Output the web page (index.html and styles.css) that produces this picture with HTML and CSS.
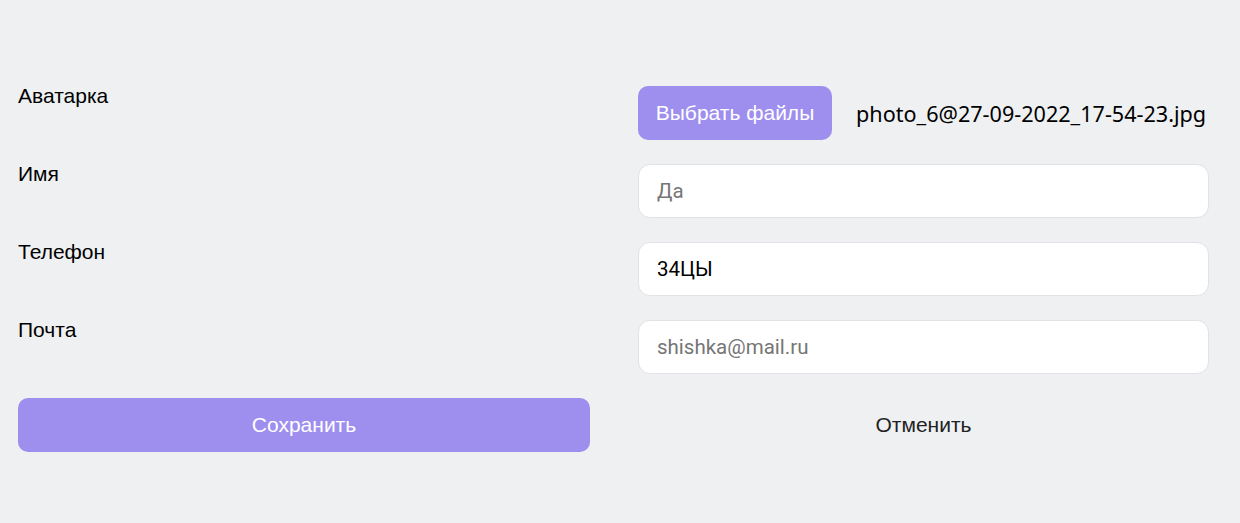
FILE: index.html
```html
<!DOCTYPE html>
<html lang="ru">
<head>
<meta charset="utf-8">
<link rel="stylesheet" href="styles.css">
</head>
<body>
<form class="profile-form">
  <label class="field-label">Аватарка</label>
  <div class="file-row">
    <span class="file-btn">Выбрать файлы</span>
    <span class="file-name">photo_6@27-09-2022_17-54-23.jpg</span>
  </div>
  <label class="field-label">Имя</label>
  <input class="text-input" type="text" placeholder="Да">
  <label class="field-label">Телефон</label>
  <input class="text-input" type="text" value="34ЦЫ">
  <label class="field-label">Почта</label>
  <input class="text-input" type="text" placeholder="shishka@mail.ru">
  <button class="save-btn" type="button">Сохранить</button>
  <button class="cancel-btn" type="button">Отменить</button>
</form>
</body>
</html>
```
FILE: styles.css
```css
html, body {
  margin: 0;
  padding: 0;
  background: #eff0f2;
}
body {
  font-family: "Liberation Sans", Arial, sans-serif;
  color: #000;
}
.profile-form {
  display: grid;
  grid-template-columns: 572px 571px;
  grid-auto-rows: 54px;
  column-gap: 48px;
  row-gap: 24px;
  padding: 86px 0 0 18px;
}
.field-label {
  font-size: 21px;
  line-height: 20px;
  color: #000;
}
.file-row {
  display: flex;
  align-items: center;
  gap: 24px;
}
.file-btn {
  display: flex;
  align-items: center;
  justify-content: center;
  flex-shrink: 0;
  width: 194px;
  height: 54px;
  background: #9e8fef;
  color: #fff;
  border-radius: 10px;
  font-size: 21px;
}
.file-name {
  font-family: "Noto Sans", "Open Sans", sans-serif;
  font-size: 21.6px;
  white-space: nowrap;
  color: #000;
}
.text-input {
  box-sizing: border-box;
  width: 571px;
  height: 54px;
  border: 1px solid #e1e1e6;
  border-radius: 12px;
  background: #fff;
  padding: 0 18px;
  font-family: Roboto, "Liberation Sans", sans-serif;
  font-size: 20.5px;
  color: #000;
  outline: none;
}
.text-input::placeholder {
  color: #767676;
}
.save-btn {
  border: none;
  border-radius: 10px;
  background: #9e8fef;
  color: #fff;
  font-family: "Liberation Sans", Arial, sans-serif;
  font-size: 21px;
  height: 54px;
}
.cancel-btn {
  border: none;
  background: transparent;
  color: #222;
  font-family: "Liberation Sans", Arial, sans-serif;
  font-size: 21px;
  height: 54px;
}
```
